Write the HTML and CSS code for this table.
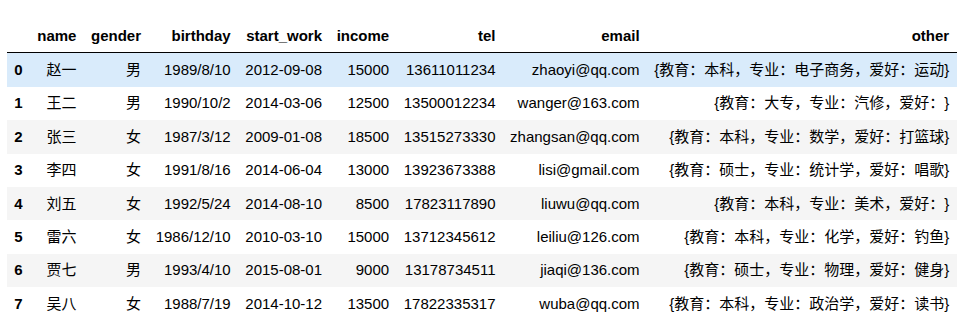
FILE: index.html
```html
<!DOCTYPE html>
<html lang="zh">
<head>
<meta charset="utf-8">
<title>DataFrame</title>
<link rel="stylesheet" href="styles.css">
</head>
<body>
<div class="output">
<table class="dataframe">
  <thead>
    <tr>
      <th></th>
      <th>name</th>
      <th>gender</th>
      <th>birthday</th>
      <th>start_work</th>
      <th>income</th>
      <th>tel</th>
      <th>email</th>
      <th>other</th>
    </tr>
  </thead>
  <tbody>
    <tr class="hover">
      <th>0</th><td>赵一</td><td>男</td><td>1989/8/10</td><td>2012-09-08</td><td>15000</td><td>13611011234</td><td>zhaoyi@qq.com</td><td>{教育：本科，专业：电子商务，爱好：运动}</td>
    </tr>
    <tr>
      <th>1</th><td>王二</td><td>男</td><td>1990/10/2</td><td>2014-03-06</td><td>12500</td><td>13500012234</td><td>wanger@163.com</td><td>{教育：大专，专业：汽修，爱好：}</td>
    </tr>
    <tr>
      <th>2</th><td>张三</td><td>女</td><td>1987/3/12</td><td>2009-01-08</td><td>18500</td><td>13515273330</td><td>zhangsan@qq.com</td><td>{教育：本科，专业：数学，爱好：打篮球}</td>
    </tr>
    <tr>
      <th>3</th><td>李四</td><td>女</td><td>1991/8/16</td><td>2014-06-04</td><td>13000</td><td>13923673388</td><td>lisi@gmail.com</td><td>{教育：硕士，专业：统计学，爱好：唱歌}</td>
    </tr>
    <tr>
      <th>4</th><td>刘五</td><td>女</td><td>1992/5/24</td><td>2014-08-10</td><td>8500</td><td>17823117890</td><td>liuwu@qq.com</td><td>{教育：本科，专业：美术，爱好：}</td>
    </tr>
    <tr>
      <th>5</th><td>雷六</td><td>女</td><td>1986/12/10</td><td>2010-03-10</td><td>15000</td><td>13712345612</td><td>leiliu@126.com</td><td>{教育：本科，专业：化学，爱好：钓鱼}</td>
    </tr>
    <tr>
      <th>6</th><td>贾七</td><td>男</td><td>1993/4/10</td><td>2015-08-01</td><td>9000</td><td>13178734511</td><td>jiaqi@136.com</td><td>{教育：硕士，专业：物理，爱好：健身}</td>
    </tr>
    <tr>
      <th>7</th><td>吴八</td><td>女</td><td>1988/7/19</td><td>2014-10-12</td><td>13500</td><td>17822335317</td><td>wuba@qq.com</td><td>{教育：本科，专业：政治学，爱好：读书}</td>
    </tr>
  </tbody>
</table>
</div>
</body>
</html>
```
FILE: styles.css
```css
html, body {
  margin: 0;
  padding: 0;
  background: #ffffff;
}

.output {
  padding: 19px 0 0 7px;
}

.dataframe {
  border: none;
  border-collapse: collapse;
  border-spacing: 0;
  color: #000000;
  font-family: "Liberation Sans", "Noto Sans CJK SC", sans-serif;
  font-size: 15px;
  text-spacing-trim: space-all;
}

.dataframe th,
.dataframe td {
  text-align: right;
  vertical-align: middle;
  padding: 7.5px 7.3px;
  line-height: 18.4px;
  white-space: nowrap;
  border: none;
}

.dataframe th {
  font-weight: bold;
}

.dataframe thead {
  border-bottom: 1px solid #000000;
}

.dataframe tbody tr:nth-child(odd) {
  background: #f5f5f5;
}

.dataframe tbody tr.hover {
  background: #d9ebfb;
}
```
